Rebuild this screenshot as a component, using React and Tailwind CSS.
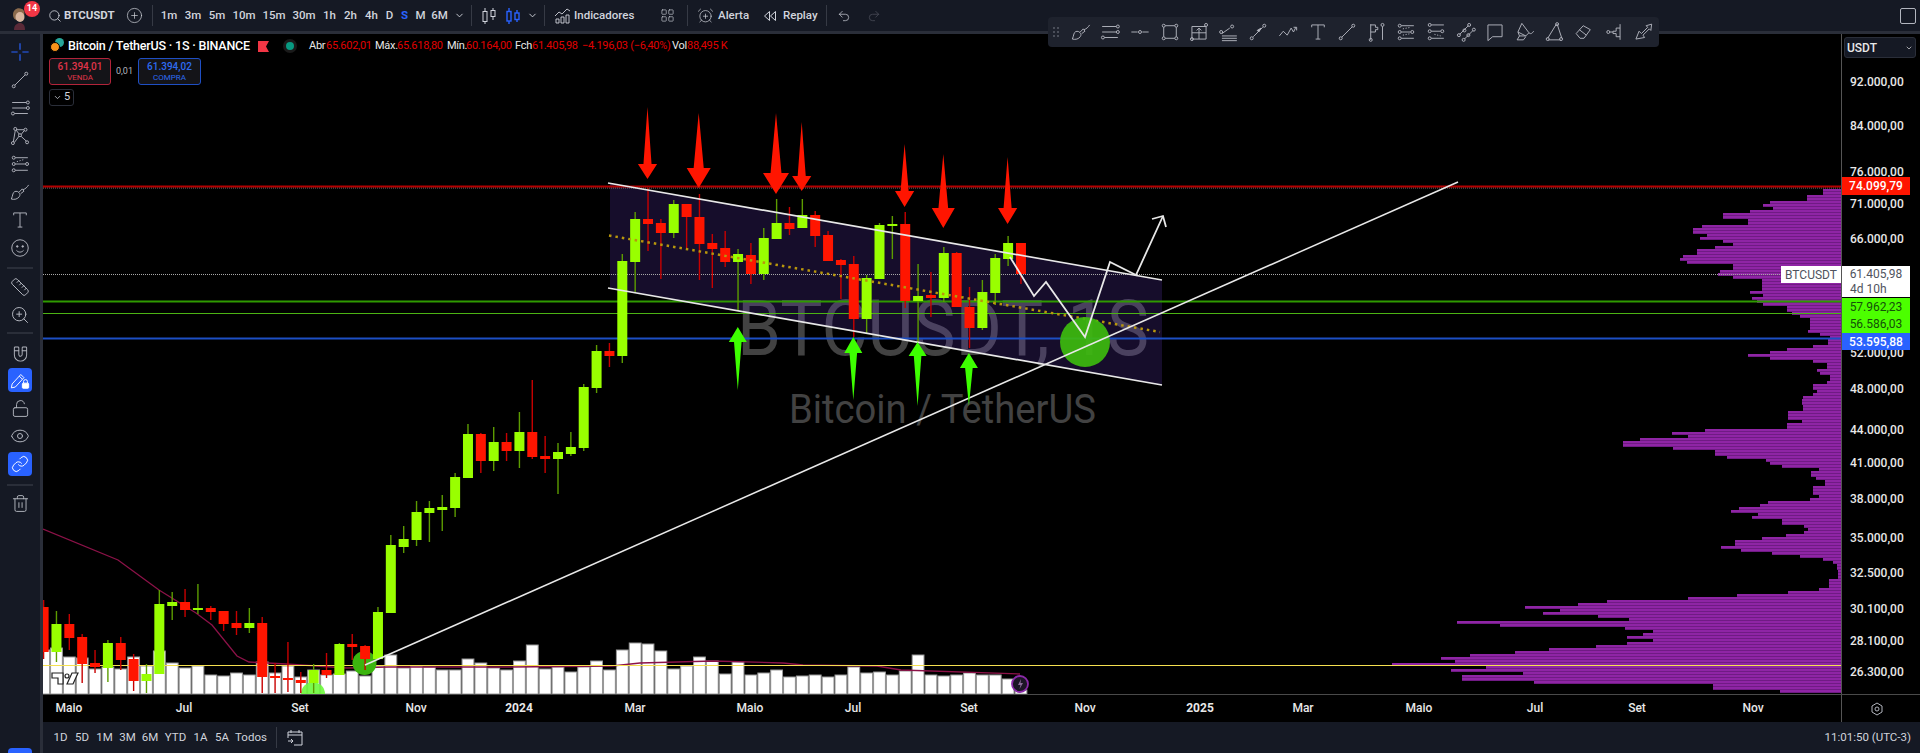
import {
  AlarmClockPlus,
  ChevronDown,
  CirclePlus,
  Eye,
  LayoutGrid,
  Link,
  LockOpen,
  Magnet,
  Redo2,
  Ruler,
  Search,
  Trash2,
  Undo2,
  ZoomIn,
} from "lucide-react";

// [wick top, body top, body bottom, wick bottom, green?] in page pixels, one per week
const candles = [
  [600, 607, 652, 659, 0], [611, 624, 652, 662, 1], [614, 624, 638, 650, 0], [634, 637, 664, 683, 0],
  [650, 663, 667, 673, 0], [640, 643, 668, 682, 1], [637, 643, 660, 670, 0], [654, 659, 681, 691, 0],
  [664, 674, 681, 693, 1], [590, 604, 674, 674, 1], [592, 602, 606, 620, 1], [589, 602, 610, 617, 0],
  [584, 608, 610, 614, 1], [606, 608, 612, 620, 0], [611, 611, 624, 631, 0], [611, 623, 628, 635, 0],
  [608, 623, 628, 633, 1], [617, 623, 677, 693, 0], [663, 676, 678, 693, 0], [642, 678, 680, 692, 0],
  [672, 680, 683, 693, 0], [664, 670, 683, 693, 1], [653, 670, 675, 678, 0], [643, 644, 675, 675, 1],
  [634, 644, 647, 660, 0], [645, 646, 659, 670, 0], [607, 612, 659, 660, 1], [535, 545, 613, 613, 1],
  [526, 539, 547, 553, 1], [501, 512, 540, 546, 1], [501, 508, 513, 542, 1], [495, 507, 510, 531, 1],
  [473, 477, 508, 517, 1], [424, 434, 478, 478, 1], [433, 434, 461, 473, 0], [427, 442, 461, 471, 1],
  [433, 442, 451, 461, 0], [412, 432, 451, 468, 1], [380, 432, 457, 459, 0], [436, 456, 459, 473, 0],
  [443, 452, 459, 494, 1], [432, 447, 454, 456, 1], [384, 387, 448, 451, 1], [345, 351, 388, 393, 1],
  [343, 351, 356, 367, 0], [254, 261, 356, 363, 1], [212, 219, 262, 292, 1], [188, 219, 224, 251, 0],
  [219, 223, 233, 279, 0], [200, 204, 233, 238, 1], [204, 204, 217, 248, 0], [194, 217, 244, 280, 0],
  [234, 243, 249, 288, 0], [231, 248, 262, 267, 0], [249, 254, 262, 310, 1], [243, 255, 274, 284, 0],
  [228, 238, 274, 280, 1], [199, 223, 239, 239, 1], [207, 223, 229, 235, 0], [199, 215, 228, 228, 1],
  [211, 215, 236, 247, 0], [231, 235, 261, 261, 0], [259, 260, 265, 299, 0], [256, 264, 319, 337, 0],
  [275, 278, 319, 333, 1], [223, 225, 279, 279, 1], [216, 224, 225, 259, 1], [212, 224, 301, 308, 0],
  [264, 296, 301, 342, 1], [272, 295, 298, 317, 0], [247, 253, 298, 302, 1], [252, 253, 307, 307, 0],
  [287, 307, 328, 348, 0], [280, 292, 328, 330, 1], [254, 258, 293, 305, 1], [236, 243, 259, 266, 1],
  [243, 243, 274, 284, 0],
];

// volume bar tops, one per candle
const volumes = [
  650, 648, 657, 658, 669, 667, 669, 657, 666, 651, 663, 668, 666, 675, 676, 673, 675, 662, 673, 666,
  677, 670, 675, 674, 671, 676, 666, 655, 668, 666, 667, 670, 670, 659, 663, 668, 670, 661, 645, 669,
  667, 672, 667, 661, 670, 650, 643, 644, 651, 669, 666, 657, 661, 674, 662, 675, 673, 670, 677, 676,
  675, 677, 675, 667, 673, 672, 675, 671, 655, 675, 676, 675, 673, 675, 675, 679, 690,
];

// right-hand volume profile, [y, left edge of the row]
const profile = [
  [189, 1833], [192, 1823], [198, 1807], [203, 1770], [205, 1763], [208, 1773], [212, 1750], [217, 1723],
  [220, 1748], [223, 1748], [227, 1702], [232, 1693], [235, 1707], [238, 1700], [242, 1723], [245, 1733],
  [248, 1715], [252, 1697], [255, 1683], [260, 1680], [263, 1687], [267, 1733], [270, 1720], [275, 1718],
  [278, 1733], [282, 1762], [288, 1762], [292, 1750], [295, 1763], [298, 1752], [302, 1757], [305, 1763],
  [310, 1787], [313, 1792], [317, 1800], [322, 1810], [327, 1810], [332, 1808], [335, 1820], [338, 1830],
  [342, 1828], [347, 1813], [350, 1787], [353, 1770], [355, 1748], [358, 1770], [362, 1813], [367, 1827],
  [370, 1817], [373, 1820], [378, 1830], [383, 1827], [387, 1813], [390, 1817], [395, 1813], [398, 1803],
  [403, 1802], [408, 1803], [417, 1788], [420, 1802], [427, 1787], [430, 1705], [433, 1672], [437, 1688],
  [440, 1640], [445, 1623], [448, 1673], [453, 1715], [458, 1727], [460, 1766], [463, 1770], [465, 1782],
  [467, 1811], [470, 1819], [475, 1811], [479, 1816], [483, 1825], [492, 1813], [495, 1819], [498, 1810],
  [502, 1768], [504, 1760], [508, 1739], [511, 1731], [515, 1758], [518, 1752], [522, 1782], [525, 1804],
  [528, 1808], [532, 1804], [535, 1786], [538, 1762], [543, 1735], [546, 1721], [549, 1741], [553, 1772],
  [556, 1800], [559, 1823], [563, 1833], [567, 1837], [577, 1838], [585, 1829], [588, 1819], [591, 1788],
  [593, 1760], [596, 1737], [598, 1688], [602, 1607], [604, 1578], [607, 1525], [610, 1560], [613, 1543],
  [615, 1598], [618, 1629], [621, 1457], [623, 1415], [626, 1500], [629, 1625], [632, 1653], [635, 1643],
  [638, 1627], [640, 1653], [643, 1627], [647, 1596], [649, 1549], [653, 1515], [656, 1470], [659, 1441],
  [661, 1455], [664, 1392], [667, 1486], [671, 1451], [674, 1523], [677, 1462], [680, 1462], [683, 1534],
  [687, 1713], [690, 1780], [693, 1806],
];

const maLine = "43,529 118,560 159,590 196,613 212,625 237,656 249,662 286,664 347,668 388,667 510,667 612,666 640,663 713,661 783,663 803,665 877,666 901,670 1020,674";

const redArrows = [
  [647.5, 107, 164, 179, 9.6], [698.7, 113, 168, 188, 12], [776, 113, 173, 194, 13], [801.7, 122, 176, 191, 9.6],
  [904.6, 144, 191, 207, 9.6], [943.3, 154, 208, 228, 11.5], [1007.6, 157, 208, 224, 9.6],
];
const greenArrows = [
  [737.8, 390, 342, 327, 9], [853.3, 400, 353, 337, 9], [917.6, 406, 356, 342, 9], [968.9, 406, 368, 353, 9],
];

const priceTicks = [
  ["92.000,00", 82], ["84.000,00", 126], ["76.000,00", 172], ["71.000,00", 204], ["66.000,00", 239],
  ["52.000,00", 353], ["48.000,00", 389], ["44.000,00", 430], ["41.000,00", 463], ["38.000,00", 499],
  ["35.000,00", 538], ["32.500,00", 573], ["30.100,00", 609], ["28.100,00", 641], ["26.300,00", 672],
];

const timeTicks = [
  ["Maio", 69], ["Jul", 184], ["Set", 300], ["Nov", 416], ["2024", 519, true], ["Mar", 635], ["Maio", 750], ["Jul", 853],
  ["Set", 969], ["Nov", 1085], ["2025", 1200, true], ["Mar", 1303], ["Maio", 1419], ["Jul", 1535], ["Set", 1637], ["Nov", 1753],
];

const candleX = (i) => 43.6 + i * 12.86;

const profileLeft = (y) => {
  for (let i = 1; i < profile.length; i++) {
    if (y <= profile[i][0]) return profile[i][1];
  }
  return 1806;
};

const arrowPoints = ([x, a, b, c, w]) =>
  `${x},${a} ${x + w * 0.42},${b} ${x + w},${b} ${x},${c} ${x - w},${b} ${x - w * 0.42},${b}`;

const Chart = () => {
  const rows = [];
  for (let y = 189; y < 693; y += 3) rows.push(y);

  return (
    <svg width="1798" height="660" viewBox="43 34 1798 660" className="block">
      <rect x="43" y="34" width="1798" height="660" fill="#000" />

      {/* watermark */}
      <text x="737" y="355" fontFamily="Roboto" fontSize="78" fill="#424242" textLength="412" lengthAdjust="spacingAndGlyphs">BTCUSDT, 1S</text>
      <text x="789" y="423" fontFamily="Roboto" fontSize="41" fill="#424242" textLength="307" lengthAdjust="spacingAndGlyphs">Bitcoin / TetherUS</text>

      {/* volume profile */}
      {rows.map((y) => (
        <g key={y}>
          <rect x={profileLeft(y)} y={y} width={1841 - profileLeft(y)} height="3" fill="#701b84" />
          <rect x={profileLeft(y)} y={y} width={1841 - profileLeft(y)} height="2" fill="#8f25a5" />
        </g>
      ))}

      <polygon points="610,183 1162,280 1162,385 610,288" fill="#6e41d8" fillOpacity="0.2" />

      {/* horizontal levels */}
      <line x1="43" x2="1841" y1="188" y2="188" stroke="#777" strokeDasharray="1 1" />
      <line x1="43" x2="1841" y1="186.5" y2="186.5" stroke="#b30000" strokeWidth="2" />
      <line x1="43" x2="1841" y1="274.5" y2="274.5" stroke="#a8a8a8" strokeDasharray="1 1" />
      <line x1="43" x2="1841" y1="301.5" y2="301.5" stroke="#2f9a00" strokeWidth="2" />
      <line x1="43" x2="1841" y1="313.5" y2="313.5" stroke="#4cb314" />
      <line x1="43" x2="1841" y1="338.5" y2="338.5" stroke="#1c4fc4" strokeWidth="2" />

      {/* volume */}
      {volumes.map((top, i) => (
        <rect key={i} x={candleX(i) - 5.9} y={top} width="11.8" height={694 - top} fill="#fff" stroke="#9a9a9a" strokeWidth="1" />
      ))}

      <g fill="#fff" stroke="#222" strokeWidth="1.2">
        <path d="M52 673h11v11h-5v-6h-6z" />
        <circle cx="67" cy="676" r="2" />
        <path d="M72 673h6l-5 11h-6z" />
      </g>

      <polyline points={maLine} fill="none" stroke="#8c1248" strokeWidth="1.3" />
      <line x1="43" x2="1841" y1="665.5" y2="665.5" stroke="#f5e050" />

      <circle cx="313" cy="694" r="12" fill="#6dfa3c" fillOpacity="0.9" />
      <circle cx="364.5" cy="663" r="12" fill="#3cb50f" />

      {/* candles */}
      {candles.map(([wt, bt, bb, wb, up], i) => (
        <g key={i}>
          <line x1={candleX(i)} x2={candleX(i)} y1={wt} y2={wb} stroke={up ? "#5c9c00" : "#c80000"} strokeWidth="1.4" />
          <rect x={candleX(i) - 5} y={bt} width="10" height={Math.max(bb - bt, 2)} fill={up ? "#99ff00" : "#ff1500"} />
        </g>
      ))}

      {/* channel */}
      <line x1="608" y1="183" x2="1162" y2="280" stroke="#e8e8e8" strokeWidth="1.7" />
      <line x1="608" y1="288" x2="1162" y2="385" stroke="#e8e8e8" strokeWidth="1.7" />
      <line x1="609" y1="235.5" x2="1160" y2="332" stroke="#b8960c" strokeWidth="2.5" strokeDasharray="2.5 4" />

      <circle cx="1085" cy="342" r="25" fill="#3dbb0e" fillOpacity="0.92" />
      <line x1="365" y1="665" x2="1458" y2="182" stroke="#e8e8e8" strokeWidth="1.5" />
      <polyline points="1010,257 1034,296 1046,282 1085,337 1110,262 1136,275 1163,216" fill="none" stroke="#e8e8e8" strokeWidth="1.8" />
      <polyline points="1152,219 1163,216 1166,227" fill="none" stroke="#e8e8e8" strokeWidth="1.8" />

      {redArrows.map((a) => (
        <polygon key={a[0]} points={arrowPoints(a)} fill="#ff1500" />
      ))}
      {greenArrows.map((a) => (
        <polygon key={a[0]} points={arrowPoints(a)} fill="#3dff00" />
      ))}

      <circle cx="1020" cy="684" r="8" fill="#1c1526" stroke="#8a2aa8" strokeWidth="1.8" />
      <path d="M1021 679l-3 6h2.500l-1 4 3.500-6h-2.500z" fill="#8a6a9a" />
    </svg>
  );
};

// toolbar glyph in the 28px box the chart tools use
const G = ({ children, size = 22, className = "" }) => (
  <svg width={size} height={size} viewBox="0 0 28 28" fill="none" stroke="currentColor" strokeWidth="1.2" className={className}>
    {children}
  </svg>
);

const Node = ({ x, y }) => <circle cx={x} cy={y} r="1.9" />;

const Crosshair = () => (
  <G className="text-[#2962ff]"><path d="M14 3v8M14 17v8M3 14h8M17 14h8" strokeWidth="1.5" /></G>
);
const TrendLine = () => (
  <G><Node x="6" y="22" /><Node x="22" y="6" /><path d="M7.500 20.500 20.500 7.500" /></G>
);
const FibLines = () => (
  <G><path d="M4 7h18M4 14h18M7 21h17" /><Node x="24" y="7" /><Node x="5" y="21" /><Node x="24" y="14" /></G>
);
const PatternTool = () => (
  <G><Node x="8" y="5" /><Node x="21" y="6" /><Node x="5" y="23" /><Node x="23" y="22" /><Node x="14" y="13" /><path d="M8 7l-2.500 14.500M9.500 6 19 6M7 22 13 14M9 6.500l4 5M15.500 12 19.500 7M15.500 14.500l6.500 6" /></G>
);
const Forecast = () => (
  <G><Node x="6" y="6" /><Node x="6" y="14" /><Node x="6" y="22" /><Node x="23" y="14" /><path d="M8 6h16M8 14h13M8 22h16" /><path d="M10 11l10-3" strokeDasharray="1.500 2" /></G>
);
const Brush = () => (
  <G><path d="M3 23c4 1 8 0 10-3 1.500-2 1-4 0-5l-2-1.500c-3-1-5 0-6 3-.5 2-1 4-2 6.500z" /><path d="M13 14l4-4 2 3-4 3M18 11c3-1 5-3 7-6" /></G>
);
const TextTool = () => (
  <G><path d="M6 8V5h16v3M14 5v18M11 23h6" /></G>
);
const Smile = () => (
  <G><circle cx="14" cy="14" r="10.500" /><circle cx="10.500" cy="12" r="1" fill="currentColor" /><circle cx="17.500" cy="12" r="1" fill="currentColor" /><path d="M9.500 17c2.500 3 6.500 3 9 0" /></G>
);
const PencilLock = () => (
  <G className="text-white"><path d="M4 19 15 7l4 4L8 23l-5 1z" /><path d="M13 9l4 4" /><rect x="17" y="18" width="8" height="6.500" rx="1" fill="#fff" /><path d="M18.500 18v-2a2.500 2.500 0 0 1 5 0v2" /></G>
);

const leftTools = [Crosshair, TrendLine, FibLines, PatternTool, Forecast, Brush, TextTool, Smile];

const ToolSlot = ({ children, active }) => (
  <div className="h-[28px] flex items-center justify-center text-[#b2b5be]">
    <div className={`w-6 h-6 rounded flex items-center justify-center ${active ? "bg-[#2962ff]" : ""}`}>{children}</div>
  </div>
);

const Sep = ({ className = "" }) => <div className={`mx-[7px] h-[2px] bg-[#2a2e39] ${className}`} />;

const LeftToolbar = () => (
  <div className="w-[40px] shrink-0 bg-[#151924] flex flex-col pt-[4px] overflow-hidden">
    {leftTools.map((Icon, i) => (
      <ToolSlot key={i}><Icon /></ToolSlot>
    ))}
    <Sep className="mt-[5px] mb-[4px]" />
    <ToolSlot><Ruler size={20} strokeWidth={1.2} /></ToolSlot>
    <ToolSlot><ZoomIn size={20} strokeWidth={1.2} /></ToolSlot>
    <Sep className="mt-[3px] mb-[4px]" />
    <ToolSlot><Magnet size={19} strokeWidth={1.2} className="rotate-[135deg]" /></ToolSlot>
    <ToolSlot active><PencilLock /></ToolSlot>
    <ToolSlot><LockOpen size={19} strokeWidth={1.2} /></ToolSlot>
    <ToolSlot><Eye size={20} strokeWidth={1.2} /></ToolSlot>
    <ToolSlot active><Link size={18} strokeWidth={1.3} className="text-white" /></ToolSlot>
    <Sep className="mt-[6px] mb-[3px]" />
    <ToolSlot><Trash2 size={19} strokeWidth={1.2} /></ToolSlot>
    <div className="mt-auto mx-[8px] h-[5px] bg-[#2962ff] rounded-t" />
  </div>
);

// floating drawing bar, left to right
const drawTools = [
  <Brush />,
  <FibLines />,
  <G><path d="M3 14h8M17 14h8" /><Node x="14" y="14" /></G>,
  <G><path d="M6 8v12M22 8v12M8 6h12M8 22h12" /><Node x="6" y="6" /><Node x="22" y="6" /><Node x="6" y="22" /><Node x="22" y="22" /></G>,
  <G><path d="M5 7h18v16H5zM14 9v14M5 15h18M11 12l3-3 3 3" /><Node x="23" y="5" /><Node x="5" y="23" /></G>,
  <G><path d="M5 16l10-7M5 19h19M5 22h19M5 25h19" /><Node x="4" y="14" /><Node x="18" y="7" /></G>,
  <G><Node x="6" y="22" /><Node x="22" y="6" /><path d="M8 20 20 8" /><path d="M13 12l5-3-3 5z" fill="currentColor" /></G>,
  <G><path d="M3 19l5-6 5 5 5-9 3 5 3-6" /><path d="M21 8h4v4" /></G>,
  <TextTool />,
  <TrendLine />,
  <G><path d="M6 4v20M6 5h6v3h3v3h-3v3H6" /><Node x="6" y="24" /><Node x="21" y="5" /><path d="M21 7v17" /></G>,
  <G><path d="M8 6h16M8 14h12M8 22h16" /><Node x="6" y="6" /><Node x="6" y="14" /><Node x="6" y="22" /><Node x="22" y="14" /><path d="M10 18l10-2M10 10l10-2" strokeDasharray="1.500 2" /></G>,
  <G><path d="M8 5h16M8 13h12M8 22h16" /><Node x="6" y="5" /><Node x="6" y="13" /><Node x="6" y="22" /><Node x="22" y="13" /><path d="M12 17l8 2" strokeDasharray="1.500 2" /></G>,
  <G><path d="M6 17 17 6M12 23 23 12" /><Node x="5" y="18" /><Node x="18" y="5" /><Node x="11" y="24" /><Node x="24" y="11" /><Node x="12" y="12" /><Node x="17" y="18" /></G>,
  <G><path d="M5 5h18v15H11l-6 5z" /></G>,
  <G><path d="M10 3l9 12-4 4H7l-2-5zM5 14l10 5M7 19l-3 5h8l3-4M19 15c2 2 4 1 6-2" /></G>,
  <G><path d="M17 4 6 22M18 4l6 18M7 24h15" /><Node x="18" y="4" /><Node x="6" y="23" /><Node x="23" y="23" /></G>,
  <G><path d="M4 16 13 6l9 5-8 11H9z" /><path d="M8 11l9 7" /></G>,
  <G><path d="M23 4v20M23 9h-5v4h-4v3h4v4h5" /><path d="M10 14h4" /><Node x="8" y="14" /></G>,
  <G><path d="M5 23 9 13l3 3 8-8-2-2 7-2-1 8-2-2-8 8 2 3z" /></G>,
];

const DrawBar = () => (
  <div className="absolute left-[1048px] top-[17px] w-[611px] h-[30px] rounded bg-[#1e222d] flex items-center pl-[18px] text-[#b2b5be]">
    <div className="absolute left-[5px] top-[10px] grid grid-cols-2 gap-[2px]">
      {[0, 1, 2, 3, 4, 5].map((n) => (
        <span key={n} className="w-[2px] h-[2px] bg-[#4a4e59]" />
      ))}
    </div>
    {drawTools.map((icon, i) => (
      <div key={i} className="w-[29.6px] flex items-center justify-center shrink-0">{icon}</div>
    ))}
  </div>
);

const Divider = () => <div className="w-px h-[21px] bg-[#363a45] shrink-0" />;

const intervals = [
  ["1m", 24], ["3m", 24], ["5m", 24], ["10m", 30], ["15m", 30], ["30m", 30], ["1h", 21], ["2h", 21], ["4h", 21],
  ["D", 15], ["S", 15], ["M", 17], ["6M", 21],
];

const TopBar = () => (
  <div className="h-[31px] shrink-0 bg-[#151924] flex items-center text-[#d1d4dc] text-[11.5px] font-medium relative">
    {/* avatar */}
    <div className="w-[48px] shrink-0 relative h-full">
      <svg width="20" height="24" viewBox="0 0 20 24" className="absolute left-[10px] top-[6px]">
        <path d="M3 9c0-6 5-8 9-6 3 1 3 6 1 10l-6 1c-2 0-4-2-4-5z" fill="#8a6a4c" />
        <ellipse cx="10" cy="11" rx="4.500" ry="5" fill="#d8b7a0" />
        <path d="M4 24c0-5 3-7 6-7s5 2 5 7z" fill="#5a2a38" />
      </svg>
      <span className="absolute left-[24px] top-[1px] w-[16px] h-[16px] rounded-full bg-[#f23645] text-white text-[9px] font-bold flex items-center justify-center">14</span>
    </div>
    <Search size={14} strokeWidth={1.4} className="shrink-0" />
    <span className="ml-[2px] w-[58px] font-bold text-[11.5px] shrink-0">BTCUSDT</span>
    <CirclePlus size={17} strokeWidth={1} className="ml-[4px] shrink-0" />
    <div className="ml-[9px] mr-[4px]"><Divider /></div>
    {intervals.map(([label, w]) => (
      <span key={label} className={`text-center shrink-0 ${label === "S" ? "text-[#2962ff] font-bold" : ""}`} style={{ width: w }}>{label}</span>
    ))}
    <ChevronDown size={11} className="ml-[4px] shrink-0" />
    <div className="ml-[6px]"><Divider /></div>
    <svg width="16" height="18" viewBox="0 0 16 18" fill="none" stroke="currentColor" className="ml-[9px] shrink-0">
      <path d="M4 1v3M4 14v3M12 1v3M12 10v3" /><rect x="2" y="4.500" width="4" height="10" /><rect x="10" y="3.500" width="4" height="6" />
    </svg>
    <svg width="16" height="18" viewBox="0 0 16 18" fill="none" stroke="#2962ff" strokeWidth="1.4" className="ml-[8px] shrink-0">
      <path d="M4 1v3M4 14v3M12 3v3M12 12v3" /><rect x="2" y="4.500" width="4" height="9.500" /><rect x="10" y="6" width="4" height="6.500" />
    </svg>
    <ChevronDown size={11} className="ml-[6px] shrink-0" />
    <div className="ml-[6px]"><Divider /></div>
    <svg width="17" height="17" viewBox="0 0 17 17" fill="none" stroke="currentColor" strokeWidth="0.9" className="ml-[9px] shrink-0">
      <path d="M1 9l4-4 3 2 5-5 3 2" /><path d="M2 12h3v4H2zM7 10h3v6H7zM12 8h3v8h-3z" />
    </svg>
    <span className="ml-[3px] w-[60px] shrink-0">Indicadores</span>
    <LayoutGrid size={15} strokeWidth={1} className="ml-[26px] shrink-0" />
    <div className="ml-[12px]"><Divider /></div>
    <AlarmClockPlus size={17} strokeWidth={1} className="ml-[9px] shrink-0" />
    <span className="ml-[4px] w-[34px] shrink-0">Alerta</span>
    <svg width="14" height="12" viewBox="0 0 14 12" fill="none" stroke="currentColor" className="ml-[11px] shrink-0">
      <path d="M6.500 1.500 1.500 6l5 4.500zM12.500 1.500 7.500 6l5 4.500z" />
    </svg>
    <span className="ml-[6px] w-[36px] shrink-0">Replay</span>
    <div className="ml-[7px]"><Divider /></div>
    <Undo2 size={14} strokeWidth={1.2} className="ml-[10px] shrink-0" />
    <Redo2 size={14} strokeWidth={1.2} className="ml-[16px] shrink-0 text-[#50535e]" />
    <div className="ml-auto mr-[4px] w-[16px] h-[16px] rounded-[2px] border border-[#b2b5be]" />
  </div>
);

// OHLC strip: [text, width, is it a label?]
const ohlc = [
  ["Abr", 17, true], ["65.602,01", 49], ["Máx.", 22, true], ["65.618,80", 50], ["Mín.", 19, true], ["60.164,00", 49],
  ["Fch", 17, true], ["61.405,98", 50], ["−4.196,03 (−6,40%)", 90], ["Vol", 15, true], ["88,495 K", 38],
];

const Legend = () => (
  <div className="absolute left-[6px] top-[5px] text-[12px] pointer-events-none">
    <div className="flex items-center h-[14px] whitespace-nowrap">
      <span className="relative w-[19px] h-[14px] shrink-0">
        <span className="absolute left-[6px] top-[-1px] w-[9px] h-[9px] rounded-full bg-[#26a69a]" />
        <span className="absolute left-[1px] top-[3px] w-[10px] h-[10px] rounded-full bg-[#f7931a] border border-black" />
      </span>
      <span className="text-white font-medium text-[12.5px] w-[190px] shrink-0 tracking-[-0.2px]">Bitcoin / TetherUS · 1S · BINANCE</span>
      <svg width="11" height="11" viewBox="0 0 11 11" className="shrink-0"><path d="M0 0h11L8 5.500 11 11H0z" fill="#f23645" /></svg>
      <span className="ml-[17px] w-[8px] h-[8px] rounded-full bg-[#089981] ring-[3px] ring-[#1a1a1a] shrink-0" />
      <div className="ml-[15px] flex text-[11px] text-[#e00000] tracking-[-0.3px]">
        {ohlc.map(([text, w, isLabel]) => (
          <span key={text} className={`shrink-0 ${isLabel ? "text-[#e8e8e8]" : ""}`} style={{ width: w }}>{text}</span>
        ))}
      </div>
    </div>
    <div className="flex items-center mt-[5px]">
      <div className="w-[62px] h-[27px] rounded-[3px] border border-[#b2243a] bg-[#141418] flex flex-col items-center justify-center leading-none text-[#e0344a]">
        <span className="text-[10px] font-medium">61.394,01</span>
        <span className="text-[8px] mt-[2px]">VENDA</span>
      </div>
      <span className="w-[27px] text-center text-[9px] text-[#b2b5be]">0,01</span>
      <div className="w-[63px] h-[27px] rounded-[3px] border border-[#1f4fc4] bg-[#141418] flex flex-col items-center justify-center leading-none text-[#2e6bf0]">
        <span className="text-[10px] font-medium">61.394,02</span>
        <span className="text-[8px] mt-[2px]">COMPRA</span>
      </div>
    </div>
    <div className="mt-[4px] w-[25px] h-[17px] rounded-[3px] border border-[#2a2e39] flex items-center justify-center gap-[2px] text-[#d1d4dc] text-[11px]">
      <ChevronDown size={9} strokeWidth={2} />5
    </div>
  </div>
);

const PriceTag = ({ top, height, className, children }) => (
  <div className={`absolute left-0 w-[68px] flex items-center justify-center text-[12px] ${className}`} style={{ top: top - 34, height }}>
    {children}
  </div>
);

const PriceAxis = () => (
  <div className="w-[79px] shrink-0 border-l border-[#555] bg-black relative text-[#e8e8e8] text-[12px] font-medium">
    {priceTicks.map(([label, y]) => (
      <span key={label} className="absolute left-[8px] leading-none" style={{ top: y - 34 - 6 }}>{label}</span>
    ))}
    <div className="absolute left-[2px] top-[3px] w-[72px] h-[21px] rounded-[3px] border border-[#2a2e39] bg-[#151924] flex items-center justify-between px-[2px] text-[12px]">
      USDT <ChevronDown size={8} strokeWidth={2} />
    </div>
    <PriceTag top={177} height={18} className="bg-[#ff1500] text-white">74.099,79</PriceTag>
    <div className="absolute left-0 top-[232px] w-[68px] h-[31px] bg-white text-[#50535e] font-normal flex flex-col items-center justify-center leading-[15px]">
      <span>61.405,98</span>
      <span className="w-full pl-[8px]">4d 10h</span>
    </div>
    <PriceTag top={298} height={17} className="bg-[#4cff00] text-[#14500a] font-normal">57.962,23</PriceTag>
    <PriceTag top={315} height={18} className="bg-[#4cff00] text-[#14500a] font-normal">56.586,03</PriceTag>
    <PriceTag top={333} height={17} className="bg-[#2962ff] text-white">53.595,88</PriceTag>
  </div>
);

const TimeAxis = () => (
  <div className="h-[28px] shrink-0 flex border-t border-[#4a4a4a] bg-black text-[#e8e8e8] text-[12px] font-medium">
    <div className="relative flex-1">
      {timeTicks.map(([label, x, bold]) => (
        <span key={`${label}${x}`} className={`absolute top-[7px] -translate-x-1/2 leading-none ${bold ? "font-bold" : ""}`} style={{ left: x - 43 }}>{label}</span>
      ))}
    </div>
    <div className="w-[79px] border-l border-[#555] flex items-center justify-center text-[#b2b5be]">
      <svg width="14" height="14" viewBox="0 0 14 14" fill="none" stroke="currentColor" className="mr-[8px]">
        <path d="M7 1l5 3v6l-5 3-5-3V4z" /><circle cx="7" cy="7" r="2" />
      </svg>
    </div>
  </div>
);

const ranges = [
  ["1D", 21], ["5D", 22], ["1M", 23], ["3M", 23], ["6M", 22], ["YTD", 29], ["1A", 21], ["5A", 22], ["Todos", 36],
];

const BottomBar = () => (
  <div className="h-[31px] shrink-0 bg-[#151924] flex items-center text-[#d1d4dc] text-[11.5px] pl-[7px]">
    {ranges.map(([label, w]) => (
      <span key={label} className="text-center shrink-0" style={{ width: w }}>{label}</span>
    ))}
    <div className="ml-[7px]"><Divider /></div>
    <svg width="16" height="17" viewBox="0 0 16 17" fill="none" stroke="currentColor" strokeWidth="1" className="ml-[10px] shrink-0">
      <path d="M1 9V3h14v13H7M1 6h14M4 1v3M12 1v3M1 12h5M4 10l2 2-2 2" />
    </svg>
    <span className="ml-auto mr-[9px] text-[11.5px]">11:01:50 (UTC-3)</span>
  </div>
);

const App = () => {
  return (
    <div className="w-[1920px] h-[753px] overflow-hidden flex flex-col bg-[#2a2e39] relative font-[Roboto,sans-serif]">
      <TopBar />
      <div className="flex-1 min-h-0 flex mt-[3px]">
        <LeftToolbar />
        <div className="flex-1 min-w-0 ml-[3px] flex flex-col">
          <div className="flex-1 min-h-0 flex relative bg-black">
            <div className="w-[1798px] shrink-0 overflow-hidden">
              <Chart />
            </div>
            <PriceAxis />
            <Legend />
            {/* symbol tag next to the last price */}
            <div className="absolute left-[1738px] top-[232px] w-[60px] h-[17px] bg-white text-[#50535e] text-[12px] flex items-center justify-center">BTCUSDT</div>
          </div>
          <TimeAxis />
          <BottomBar />
        </div>
      </div>
      <DrawBar />
    </div>
  );
};

export default App;
